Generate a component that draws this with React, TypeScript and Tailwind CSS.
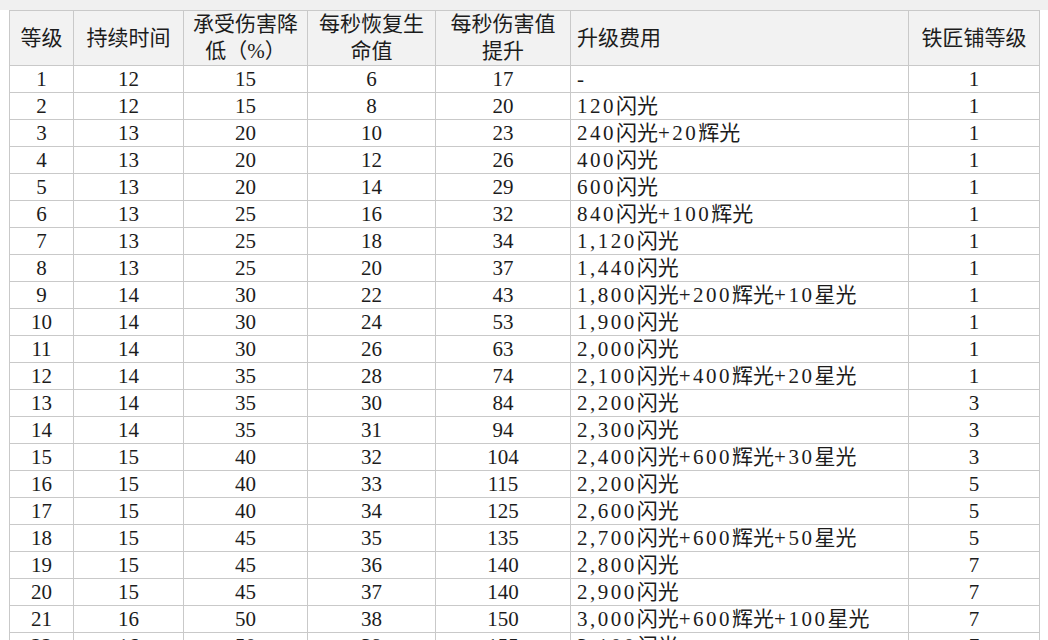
import React from "react";

type Row = [string, string, string, string, string, string, string];

const rows: Row[] = [
  ["1", "12", "15", "6", "17", "-", "1"],
  ["2", "12", "15", "8", "20", "120闪光", "1"],
  ["3", "13", "20", "10", "23", "240闪光+20辉光", "1"],
  ["4", "13", "20", "12", "26", "400闪光", "1"],
  ["5", "13", "20", "14", "29", "600闪光", "1"],
  ["6", "13", "25", "16", "32", "840闪光+100辉光", "1"],
  ["7", "13", "25", "18", "34", "1,120闪光", "1"],
  ["8", "13", "25", "20", "37", "1,440闪光", "1"],
  ["9", "14", "30", "22", "43", "1,800闪光+200辉光+10星光", "1"],
  ["10", "14", "30", "24", "53", "1,900闪光", "1"],
  ["11", "14", "30", "26", "63", "2,000闪光", "1"],
  ["12", "14", "35", "28", "74", "2,100闪光+400辉光+20星光", "1"],
  ["13", "14", "35", "30", "84", "2,200闪光", "3"],
  ["14", "14", "35", "31", "94", "2,300闪光", "3"],
  ["15", "15", "40", "32", "104", "2,400闪光+600辉光+30星光", "3"],
  ["16", "15", "40", "33", "115", "2,200闪光", "5"],
  ["17", "15", "40", "34", "125", "2,600闪光", "5"],
  ["18", "15", "45", "35", "135", "2,700闪光+600辉光+50星光", "5"],
  ["19", "15", "45", "36", "140", "2,800闪光", "7"],
  ["20", "15", "45", "37", "140", "2,900闪光", "7"],
  ["21", "16", "50", "38", "150", "3,000闪光+600辉光+100星光", "7"],
  ["22", "16", "50", "39", "155", "3,100闪光", "7"],
];

const widths = [64, 110, 124, 128, 135, 338, 131];

// ascii runs in the cost column are set wider, like the Song font's latin glyphs
function Cost({ text }: { text: string }) {
  const parts = text.match(/[0-9,+\-]+|[^0-9,+\-]+/g) ?? [];
  return (
    <>
      {parts.map((p, i) =>
        /[0-9,+\-]/.test(p) ? (
          <span key={i} className="tracking-[2.5px]">
            {p}
          </span>
        ) : (
          <span key={i}>{p}</span>
        )
      )}
    </>
  );
}

const cell = "border border-[#c9c9c9] p-0 h-[27px] leading-[26px] text-center whitespace-nowrap";
const head = "border border-[#c9c9c9] p-0 h-[54px] leading-[27px] text-center bg-[#f2f2f2] font-normal";

export default function App() {
  return (
    <div
      className="h-[640px] w-[1048px] overflow-hidden bg-white text-[21px] text-[#1c1c1c]"
      style={{ fontFamily: '"Liberation Serif", "Noto Sans CJK SC", serif' }}
    >
      <div className="h-[10px] bg-[#f0f0f0]" />
      <table className="ml-[9px] table-fixed border-collapse">
        <colgroup>
          {widths.map((w, i) => (
            <col key={i} style={{ width: w }} />
          ))}
        </colgroup>
        <thead>
          <tr>
            <th className={head}>等级</th>
            <th className={head}>持续时间</th>
            <th className={head}>
              承受伤害降
              <br />
              低（%）
            </th>
            <th className={head}>
              每秒恢复生
              <br />
              命值
            </th>
            <th className={head}>
              每秒伤害值
              <br />
              提升
            </th>
            <th className={`${head} !text-left pl-[6px]`}>升级费用</th>
            <th className={head}>铁匠铺等级</th>
          </tr>
        </thead>
        <tbody>
          {rows.map((r) => (
            <tr key={r[0]}>
              <td className={cell}>{r[0]}</td>
              <td className={cell}>{r[1]}</td>
              <td className={cell}>{r[2]}</td>
              <td className={cell}>{r[3]}</td>
              <td className={cell}>{r[4]}</td>
              <td className={`${cell} !text-left pl-[6px]`}>
                <Cost text={r[5]} />
              </td>
              <td className={cell}>{r[6]}</td>
            </tr>
          ))}
        </tbody>
      </table>
    </div>
  );
}
